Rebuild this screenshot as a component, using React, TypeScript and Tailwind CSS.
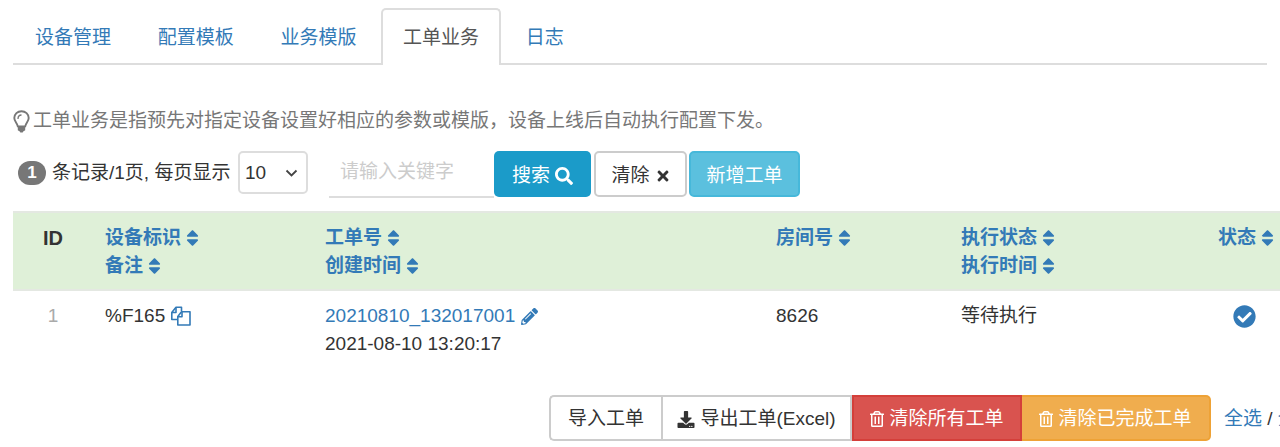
import { FaCheckCircle, FaDownload, FaPencilAlt, FaRegTrashAlt, FaSearch, FaSort, FaTimes } from "react-icons/fa";

const tabs = ["设备管理", "配置模板", "业务模版", "工单业务", "日志"];

function SortHead({ label }: { label: string }) {
  return (
    <a className="flex items-center gap-[5px] whitespace-nowrap font-bold text-[#337ab7]">
      {label}
      <FaSort className="h-[20px] w-[13px]" />
    </a>
  );
}

function BulbIcon() {
  return (
    <svg className="mr-[3px] shrink-0" width="17" height="23" viewBox="0 0 17 23" fill="none">
      <path d="M8.5 1.2C4.5 1.2 1.3 4.2 1.3 8c0 3.600 3 4.900 3.500 8.400h7.400C12.700 12.900 15.700 11.600 15.700 8c0-3.800-3.200-6.800-7.200-6.800Z" stroke="#777" strokeWidth="1.9" />
      <path d="M5 9c0-2.400 1.500-4 3.500-4" stroke="#777" strokeWidth="1.3" />
      <path d="M4.800 17h7.400v3.200l-2 1.300-.5 1h-2.400l-.5-1-2-1.300Z" fill="#777" />
    </svg>
  );
}

function FilesIcon() {
  return (
    <svg className="shrink-0" width="21" height="20" viewBox="0 0 21 20" fill="none" stroke="#337ab7" strokeWidth="1.6" strokeLinejoin="round">
      <path d="M7.500 13.500H1.800V6.500L6 1.200h5.500V5" />
      <path d="M6 1.500v5H1.800" />
      <path d="M11.500 5.800h8.500V19H7.800V10.500Z" fill="#fff" />
      <path d="M12 6v4.800H7.800" />
    </svg>
  );
}

export default function App() {
  return (
    <div className="h-[447px] w-[1280px] overflow-hidden bg-white px-[13px] pt-2 text-[19px] leading-[26px] text-[#333] [font-family:'Liberation_Sans','Noto_Sans_CJK_SC',sans-serif]">
      <ul className="flex h-[57px] border-b-2 border-[#ddd]">
        {tabs.map((t) => (
          <li
            key={t}
            className={
              t === "工单业务"
                ? "mr-[2.7px] h-[57px] rounded-t-[5px] border-2 border-b-0 border-[#ddd] bg-white px-5 pt-[15px] text-[#555]"
                : "mr-[2.7px] h-[55px] px-[22px] pt-[17px] text-[#337ab7]"
            }
          >
            {t}
          </li>
        ))}
      </ul>

      <p className="mt-[43px] flex h-[26px] items-center text-[#777]">
        <BulbIcon />
        工单业务是指预先对指定设备设置好相应的参数或模版，设备上线后自动执行配置下发。
      </p>

      <div className="mt-[17px] flex h-[47px] items-start">
        <div className="ml-[5px] mt-[9px] flex w-[220px] shrink-0 items-center">
          <span className="flex h-[24px] w-[28px] items-center justify-center rounded-full bg-[#777] text-[17px] font-bold text-white">1</span>
          <span className="ml-[6px] whitespace-nowrap">条记录/1页, 每页显示</span>
        </div>
        <div className="flex h-[43px] w-[70px] items-center justify-between rounded-[5px] border-2 border-[#ddd] pl-[5px] pr-[8px]">
          10
          <svg width="13" height="8" viewBox="0 0 13 8" fill="none" stroke="#444" strokeWidth="1.8">
            <path d="M1.5 1.5 6.5 6.5 11.5 1.5" />
          </svg>
        </div>
        <div className="ml-[21px] h-[47px] w-[165px] border-b-2 border-[#ddd] pl-[11px] pt-[8px] text-[#ccc]">请输入关键字</div>
        <button className="flex h-[46px] w-[97px] items-center justify-center gap-[5px] rounded-[5px] bg-[#1b9bc9] pt-[4px] text-white">
          搜索
          <FaSearch className="h-[18px] w-[18px]" />
        </button>
        <button className="ml-[3px] flex h-[46px] w-[93px] items-center justify-center gap-[6px] rounded-[5px] border-2 border-[#ccc] bg-white pt-[4px]">
          清除
          <FaTimes className="h-[16px] w-[14px]" />
        </button>
        <button className="ml-[2px] h-[46px] w-[111px] rounded-[5px] border-2 border-[#46b8da] bg-[#5bc0de] pt-[4px] text-white">新增工单</button>
      </div>

      <table className="mt-[13px] w-[1300px] table-fixed border-collapse">
        <colgroup>
          <col className="w-[92px]" />
          <col className="w-[220px]" />
          <col className="w-[451px]" />
          <col className="w-[185px]" />
          <col className="w-[257px]" />
          <col />
        </colgroup>
        <thead>
          <tr className="h-[78px] border-y-2 border-[#e4e8e2] bg-[#dff0d8] align-top">
            <th className="pr-[12px] pt-[12px] text-center text-[20px] font-bold">ID</th>
            <th className="pt-[12px] font-normal">
              <div className="flex flex-col gap-[2px]">
                <SortHead label="设备标识" />
                <SortHead label="备注" />
              </div>
            </th>
            <th className="pt-[12px] font-normal">
              <div className="flex flex-col gap-[2px]">
                <SortHead label="工单号" />
                <SortHead label="创建时间" />
              </div>
            </th>
            <th className="pt-[12px] font-normal">
              <SortHead label="房间号" />
            </th>
            <th className="pt-[12px] font-normal">
              <div className="flex flex-col gap-[2px]">
                <SortHead label="执行状态" />
                <SortHead label="执行时间" />
              </div>
            </th>
            <th className="pt-[12px] font-normal">
              <SortHead label="状态" />
            </th>
          </tr>
        </thead>
        <tbody>
          <tr className="h-[76px] align-top">
            <td className="pr-[12px] pt-[12px] text-center text-[#aaa]">1</td>
            <td className="pt-[12px]">
              <span className="flex items-center gap-[5px]">
                %F165
                <FilesIcon />
              </span>
            </td>
            <td className="pt-[12px]">
              <span className="flex items-center gap-[6px] text-[#337ab7]">
                20210810_132017001
                <FaPencilAlt className="h-[17px] w-[17px]" />
              </span>
              <div className="mt-[2px]">2021-08-10 13:20:17</div>
            </td>
            <td className="pt-[12px]">8626</td>
            <td className="pt-[12px]">等待执行</td>
            <td className="pt-[12px]">
              <FaCheckCircle className="ml-[15px] mt-[2px] h-[23px] w-[23px] text-[#337ab7]" />
            </td>
          </tr>
        </tbody>
      </table>

      <div className="mt-[29px] flex h-[46px] items-center whitespace-nowrap pl-[536px]">
        <button className="h-[46px] w-[112px] shrink-0 rounded-l-[5px] border-2 border-r-0 border-[#ccc] bg-white pt-[2px]">导入工单</button>
        <button className="flex h-[46px] w-[191px] shrink-0 items-center justify-center gap-[5px] border-2 border-[#ccc] bg-white pt-[2px]">
          <FaDownload className="h-[17px] w-[18px]" />
          导出工单(Excel)
        </button>
        <button className="flex h-[46px] w-[170px] shrink-0 items-center justify-center gap-[5px] border-2 border-[#d43f3a] bg-[#d9534f] pt-[2px] text-white">
          <FaRegTrashAlt className="h-[16px] w-[14px]" />
          清除所有工单
        </button>
        <button className="flex h-[46px] w-[189px] shrink-0 items-center justify-center gap-[5px] rounded-r-[5px] border-2 border-l-0 border-[#eea236] bg-[#f0ad4e] pt-[2px] text-white">
          <FaRegTrashAlt className="h-[16px] w-[14px]" />
          清除已完成工单
        </button>
        <span className="ml-[13px] pt-[2px]">
          <a className="text-[#337ab7]">全选</a> / <a className="text-[#337ab7]">全不选</a>
        </span>
      </div>
    </div>
  );
}
